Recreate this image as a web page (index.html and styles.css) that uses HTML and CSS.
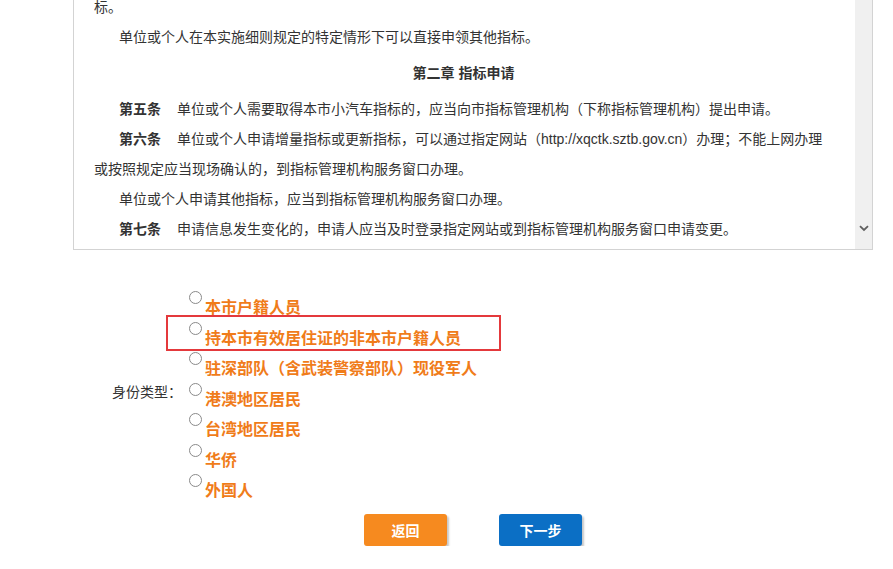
FILE: index.html
```html
<!DOCTYPE html>
<html lang="zh-CN">
<head>
<meta charset="utf-8">
<title>身份类型</title>
<link rel="stylesheet" href="styles.css">
</head>
<body>
<div class="page">
  <div class="notice">
    <div class="notice-text">
      <p class="cont">标。</p>
      <p>单位或个人在本实施细则规定的特定情形下可以直接申领其他指标。</p>
      <h3 class="chapter">第二章&nbsp;指标申请</h3>
      <p><b class="article">第五条</b>单位或个人需要取得本市小汽车指标的，应当向市指标管理机构（下称指标管理机构）提出申请。</p>
      <p><b class="article">第六条</b>单位或个人申请增量指标或更新指标，可以通过指定网站（http://xqctk.sztb.gov.cn）办理；不能上网办理或按照规定应当现场确认的，到指标管理机构服务窗口办理。</p>
      <p>单位或个人申请其他指标，应当到指标管理机构服务窗口办理。</p>
      <p><b class="article">第七条</b>申请信息发生变化的，申请人应当及时登录指定网站或到指标管理机构服务窗口申请变更。</p>
    </div>
    <div class="scrollbar">
      <svg class="chevron" width="10" height="7" viewBox="0 0 10 7"><path d="M1 1.2 L5 5 L9 1.2" fill="none" stroke="#5f5f5f" stroke-width="1.8"/></svg>
    </div>
  </div>

  <form class="identity">
    <div class="field-label">身份类型：</div>
    <div class="options">
      <label class="option"><input type="radio" name="sflx"><span>本市户籍人员</span></label>
      <label class="option highlighted"><input type="radio" name="sflx"><span>持本市有效居住证的非本市户籍人员</span></label>
      <label class="option"><input type="radio" name="sflx"><span>驻深部队（含武装警察部队）现役军人</span></label>
      <label class="option"><input type="radio" name="sflx"><span>港澳地区居民</span></label>
      <label class="option"><input type="radio" name="sflx"><span>台湾地区居民</span></label>
      <label class="option"><input type="radio" name="sflx"><span>华侨</span></label>
      <label class="option"><input type="radio" name="sflx"><span>外国人</span></label>
    </div>
  </form>

  <div class="actions">
    <button type="button" class="btn btn-back">返回</button>
    <button type="button" class="btn btn-next">下一步</button>
  </div>
</div>
</body>
</html>
```

FILE: styles.css
```css
html, body {
  margin: 0;
  padding: 0;
  background: #fff;
}

body {
  font-family: "Liberation Sans", "Noto Sans CJK SC", sans-serif;
  font-size: 14px;
  color: #333;
}

.page {
  width: 893px;
}

.notice {
  margin-left: 73px;
  width: 800px;
  height: 250px;
  box-sizing: border-box;
  border: 1px solid #d3d3d3;
  border-top: none;
  display: flex;
  overflow: hidden;
}

.notice-text {
  flex: 1;
  padding: 0 22px 0 20px;
  margin-top: -8px;
}

.notice-text p {
  margin: 0;
  line-height: 30px;
  text-indent: 25px;
}

.notice-text p.cont {
  text-indent: 0;
}

.chapter {
  margin: 6px 0;
  line-height: 30px;
  font-size: 14px;
  font-weight: bold;
  text-align: center;
}

.article {
  font-weight: bold;
  padding-right: 16px;
}

.scrollbar {
  width: 17px;
  background: #f0f0f0;
  display: flex;
  flex-direction: column;
  justify-content: flex-end;
  align-items: center;
  padding-bottom: 17px;
}

.chevron {
  display: block;
}

.identity {
  margin-top: 41px;
  padding-left: 112px;
  display: flex;
  align-items: center;
}

.field-label {
  width: 77px;
  margin-bottom: 12px;
  line-height: 20px;
}

.options {
  display: flex;
  flex-direction: column;
}

.option {
  position: relative;
  display: flex;
  align-items: flex-start;
  height: 30.5px;
  cursor: pointer;
}

.option input {
  appearance: none;
  -webkit-appearance: none;
  margin: 0 3px 0 0;
  width: 13px;
  height: 13px;
  border: 1px solid #8a8a8a;
  border-radius: 50%;
  background: #fff;
  box-sizing: border-box;
}

.option span {
  margin-top: 7px;
  line-height: 20px;
  font-size: 16px;
  font-weight: bold;
  color: #f07c1a;
  white-space: nowrap;
}

.option.highlighted::after {
  content: "";
  position: absolute;
  left: -23px;
  top: -7px;
  width: 335px;
  height: 36px;
  box-sizing: border-box;
  border: 2px solid #e4393c;
  pointer-events: none;
}

.actions {
  margin-left: 73px;
  width: 800px;
  margin-top: 9px;
  display: flex;
  justify-content: center;
  gap: 52px;
}

.btn {
  width: 83px;
  height: 32px;
  border: none;
  border-radius: 3px;
  color: #fff;
  font-family: "Liberation Sans", "Noto Sans CJK SC", sans-serif;
  font-size: 14px;
  font-weight: bold;
  box-shadow: 2px 2px 2px #c8c8c8;
  cursor: pointer;
}

.btn-back {
  background: #f68a1f;
}

.btn-next {
  background: #0b6fc5;
}
```
